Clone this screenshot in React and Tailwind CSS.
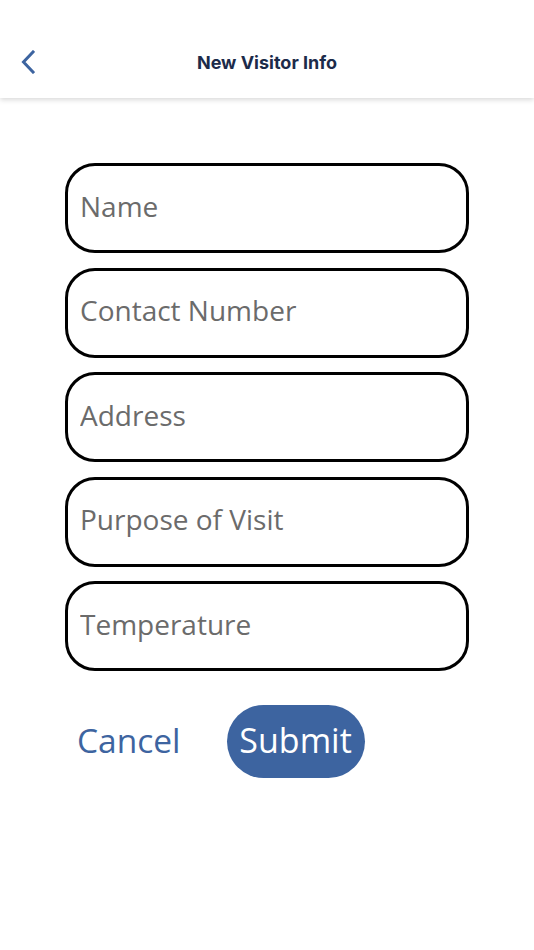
import React, { useState } from "react";

const fields = ["Name", "Contact Number", "Address", "Purpose of Visit", "Temperature"];

const App = () => {
  const [values, setValues] = useState({});

  return (
    <div className="min-h-[950px] w-full bg-white" style={{ fontFamily: "'Open Sans', sans-serif" }}>
      {/* Header */}
      <div className="relative flex h-[98px] items-center justify-center bg-white shadow-[0_2px_5px_rgba(0,0,0,0.15)]">
        <button className="absolute left-[17px] top-[46px] p-1 text-[#3d64a0]">
          <svg width="14" height="24" viewBox="0 0 14 24" fill="none">
            <path d="M12 2 L2.5 12 L12 22" stroke="currentColor" strokeWidth="3" strokeLinecap="square" />
          </svg>
        </button>
        <h1 className="mt-[27px] font-['Inter',sans-serif] text-[18px] font-bold text-[#1c2b4a]">
          New Visitor Info
        </h1>
      </div>

      {/* Form */}
      <div className="flex flex-col gap-[14.5px] px-[65px] pt-[65px]">
        {fields.map((f) => (
          <input
            key={f}
            placeholder={f}
            value={values[f] || ""}
            onChange={(e) => setValues((p) => ({ ...p, [f]: e.target.value }))}
            className="h-[90px] w-full rounded-[30px] border-[3px] border-black bg-white px-[12px] pb-[5px] text-[28px] text-[#444] placeholder:text-[#6b6b6b] outline-none"
          />
        ))}

        <div className="mt-[19.5px] flex items-center">
          <button className="ml-[12px] pb-[2px] text-[33.5px] text-[#3d64a0]">Cancel</button>
          <button className="ml-[46px] flex h-[73px] w-[138px] items-center justify-center rounded-full bg-[#3d64a0] pb-[3px] text-[34px] text-white">
            Submit
          </button>
        </div>
      </div>
    </div>
  );
};

export default App;
